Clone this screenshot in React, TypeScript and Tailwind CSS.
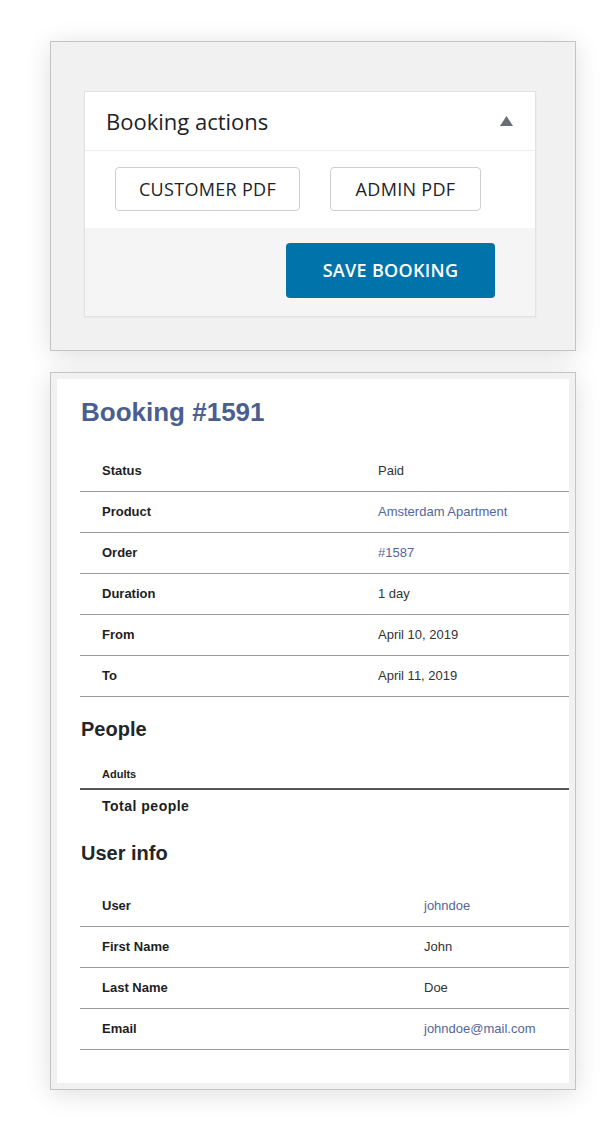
import { ReactNode } from "react";

// ── Data ────────────────────────────────────────────────────────────────────

interface Row {
  label: string;
  value: string;
  link?: boolean;
}

const bookingRows: Row[] = [
  { label: "Status", value: "Paid" },
  { label: "Product", value: "Amsterdam Apartment", link: true },
  { label: "Order", value: "#1587", link: true },
  { label: "Duration", value: "1 day" },
  { label: "From", value: "April 10, 2019" },
  { label: "To", value: "April 11, 2019" },
];

const userRows: Row[] = [
  { label: "User", value: "johndoe", link: true },
  { label: "First Name", value: "John" },
  { label: "Last Name", value: "Doe" },
  { label: "Email", value: "johndoe@mail.com", link: true },
];

// ── Pieces ──────────────────────────────────────────────────────────────────

function Frame({ children, className = "" }: { children: ReactNode; className?: string }) {
  return (
    <div
      className={`w-[526px] border border-[#c4c4c4] bg-[#f1f1f1] shadow-[0_4px_24px_rgba(0,0,0,0.13)] ${className}`}
    >
      {children}
    </div>
  );
}

function InfoTable({ rows, valueCol }: { rows: Row[]; valueCol: string }) {
  return (
    <div className="ml-[23px]">
      {rows.map((row) => (
        <div
          key={row.label}
          className="flex h-[41px] items-center border-b border-[#9a9a9a] text-[13px]"
        >
          <span className={`${valueCol} shrink-0 pl-[22px] font-bold text-[#1e1e1e]`}>
            {row.label}
          </span>
          <span className={row.link ? "text-[#55669a]" : "text-[#333333]"}>{row.value}</span>
        </div>
      ))}
    </div>
  );
}

// ── App ─────────────────────────────────────────────────────────────────────

export default function App() {
  return (
    <div className="h-[1145px] w-[600px] bg-white pl-[50px] pt-[41px]">
      {/* Booking actions metabox */}
      <Frame className="h-[310px] pl-[33px] pt-[49px] font-['Open_Sans',sans-serif]">
        <div className="w-[452px] border border-[#e2e2e2] bg-white shadow-[0_1px_2px_rgba(0,0,0,0.04)]">
          <div className="flex h-[59px] items-center justify-between border-b border-[#ececec] pl-[21px] pr-[22px]">
            <h2 className="text-[22px] leading-none text-[#1d2327]">Booking actions</h2>
            <svg width="13" height="10" viewBox="0 0 13 10">
              <polygon points="6.5,0 13,10 0,10" fill="#6b6f75" />
            </svg>
          </div>
          <div className="flex gap-[30px] pb-[17px] pl-[30px] pt-[16px]">
            <button className="h-[44px] w-[185px] rounded-[4px] border border-[#cfcfcf] bg-white text-[18px] tracking-[0.3px] text-[#1d2327]">
              CUSTOMER PDF
            </button>
            <button className="h-[44px] w-[151px] rounded-[4px] border border-[#cfcfcf] bg-white text-[18px] tracking-[0.3px] text-[#1d2327]">
              ADMIN PDF
            </button>
          </div>
          <div className="flex h-[88px] justify-end bg-[#f5f5f5] pr-[40px] pt-[15px]">
            <button className="h-[55px] w-[209px] rounded-[4px] bg-[#0073aa] text-[18px] font-semibold tracking-[0.3px] text-white">
              SAVE BOOKING
            </button>
          </div>
        </div>
      </Frame>

      {/* Booking PDF preview */}
      <Frame className="mt-[21px] h-[718px] p-[6px] font-['Liberation_Sans',Arial,sans-serif]">
        <div className="h-full overflow-hidden bg-white pt-[18px]">
          <h1 className="pl-[24px] text-[26px] font-bold leading-[30px] text-[#4b5e90]">
            Booking #1591
          </h1>
          <div className="mt-[24px]">
            <InfoTable rows={bookingRows} valueCol="w-[298px]" />
          </div>

          <h2 className="mt-[20px] pl-[24px] text-[20px] font-bold leading-[24px] text-[#22262b]">
            People
          </h2>
          <div className="ml-[23px] border-b-2 border-[#555555] pb-[7px] pl-[22px] pt-[26px] text-[11px] font-bold leading-[14px] text-[#1e1e1e]">
            Adults
          </div>
          <div className="ml-[23px] pl-[22px] pt-[7px] text-[14px] font-bold leading-[18px] tracking-[0.5px] text-[#1e1e1e]">
            Total people
          </div>

          <h2 className="mt-[26px] pl-[24px] text-[20px] font-bold leading-[24px] text-[#22262b]">
            User info
          </h2>
          <div className="mt-[21px]">
            <InfoTable rows={userRows} valueCol="w-[344px]" />
          </div>
        </div>
      </Frame>
    </div>
  );
}
